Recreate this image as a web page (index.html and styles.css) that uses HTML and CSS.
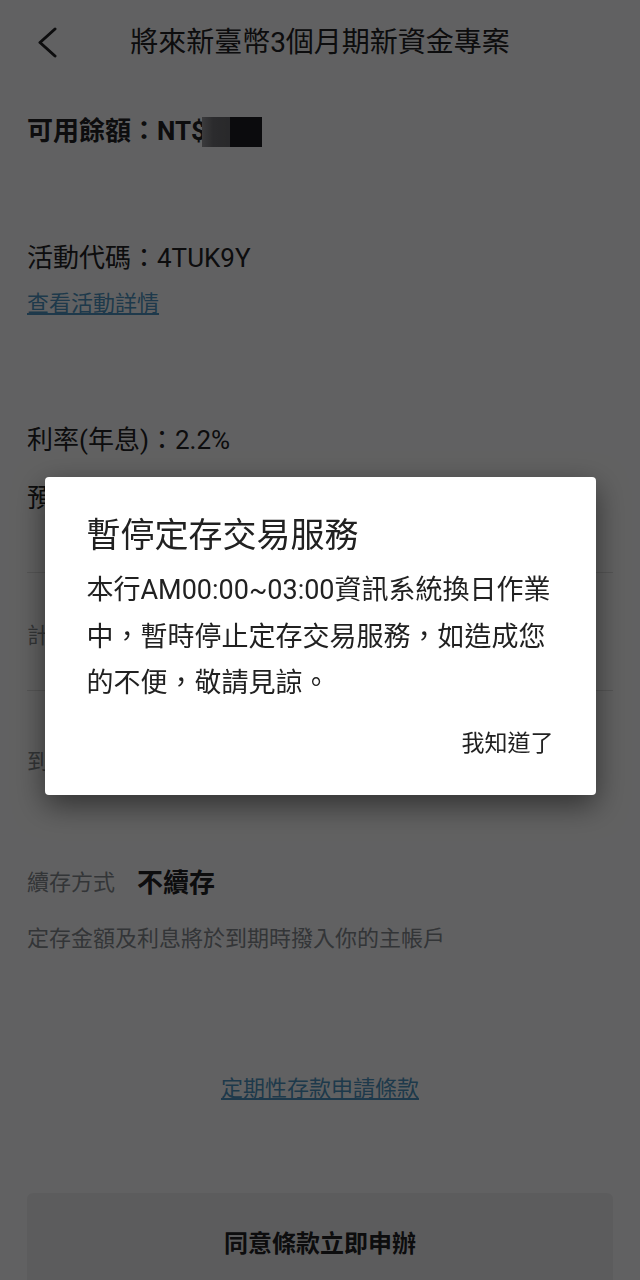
FILE: index.html
```html
<!DOCTYPE html>
<html>
<head>
  <meta charset="utf-8">
  <link rel="stylesheet" href="styles.css">
</head>
<body>
  <div class="page">
    <div class="header">
      <button class="back">
        <svg width="24" height="32" viewBox="0 0 24 32">
          <path d="M19 2 L4 15.5 L19 29" fill="none" stroke="#222" stroke-width="3" stroke-linecap="round" stroke-linejoin="round"/>
        </svg>
      </button>
      <div class="title">將來新臺幣3個月期新資金專案</div>
    </div>

    <div class="content">
      <div class="balance">可用餘額：NT$<span class="redact"><span class="redact-blur"></span><span class="redact-solid"></span></span></div>

      <div class="code">活動代碼：4TUK9Y</div>
      <a class="link" href="#">查看活動詳情</a>

      <div class="rate">利率(年息)：2.2%</div>

      <div class="row row-amount">
        <div class="row-label big">預存金額</div>
      </div>
      <div class="row row-period">
        <div class="row-label">計息</div>
      </div>
      <div class="row row-due">
        <div class="row-label">到期日</div>
      </div>

      <div class="renew">
        <span class="renew-label">續存方式</span>
        <span class="renew-value">不續存</span>
      </div>
      <div class="note">定存金額及利息將於到期時撥入你的主帳戶</div>

      <div class="terms"><a class="link" href="#">定期性存款申請條款</a></div>

      <button class="submit">同意條款立即申辦</button>
    </div>
  </div>

  <div class="overlay">
    <div class="dialog">
      <div class="dialog-title">暫停定存交易服務</div>
      <div class="dialog-body">本行AM00:00~03:00資訊系統換日作業中，暫時停止定存交易服務，如造成您的不便，敬請見諒。</div>
      <div class="dialog-actions">
        <button class="dialog-btn">我知道了</button>
      </div>
    </div>
  </div>
</body>
</html>
```

FILE: styles.css
```css
body {
  margin: 0;
  background-color: white;
  font-family: Roboto, "Noto Sans CJK TC", sans-serif;
  color: #222;
}
button {
  font-family: inherit;
}
.header {
  height: 86px;
  display: grid;
  grid-template-columns: 86px 1fr 86px;
  align-items: center;
}
.back {
  background: none;
  border: none;
  padding: 0;
  margin-left: 36px;
  width: 24px;
  height: 32px;
  display: flex;
}
.title {
  text-align: center;
  font-size: 28px;
  line-height: 40px;
}
.content {
  padding: 0 27px;
}
.balance {
  margin-top: 27px;
  font-size: 26px;
  line-height: 36px;
  font-weight: bold;
  display: flex;
  align-items: center;
}
.redact {
  display: flex;
  margin-left: -4px;
  height: 30px;
  margin-top: 2px;
}
.redact-blur {
  width: 28px;
  background: linear-gradient(90deg, #9a9a9c 0%, #727274 40%, #6c6c6e 100%);
}
.redact-solid {
  width: 32px;
  background-color: #1e1e20;
}
.code {
  margin-top: 91px;
  font-size: 26px;
  line-height: 36px;
}
.link {
  display: inline-block;
  color: #4f97c2;
  font-size: 22px;
  line-height: 32px;
  text-decoration: underline;
}
.code + .link {
  margin-top: 12px;
}
.rate {
  margin-top: 102px;
  font-size: 26px;
  line-height: 36px;
}
.row {
  border-bottom: 1px solid #e0e0e0;
}
.row-label {
  font-size: 22px;
  line-height: 36px;
  color: #868b8e;
}
.row-label.big {
  font-size: 26px;
  color: #222;
}
.row-amount {
  padding: 22px 0 56px;
}
.row-period {
  padding: 45px 0 36px;
}
.row-due {
  padding: 53px 0 31px;
  border-bottom: none;
}
.renew {
  margin-top: 54px;
  display: flex;
  align-items: center;
  line-height: 36px;
}
.renew-label {
  font-size: 22px;
  color: #868b8e;
}
.renew-value {
  margin-left: 22px;
  font-size: 26px;
  font-weight: bold;
}
.note {
  margin-top: 22px;
  font-size: 22px;
  line-height: 32px;
  color: #868b8e;
}
.terms {
  margin-top: 118px;
  text-align: center;
}
.submit {
  display: block;
  width: 100%;
  margin-top: 88px;
  height: 96px;
  border: none;
  border-radius: 6px;
  background-color: #f2f2f2;
  color: #222;
  font-size: 24px;
  font-weight: bold;
}
.overlay {
  position: fixed;
  top: 0;
  left: 0;
  right: 0;
  bottom: 0;
  background-color: rgba(0, 0, 2, 0.62);
  display: flex;
  justify-content: center;
  align-items: flex-start;
  padding-top: 477px;
}
.dialog {
  width: 551px;
  box-sizing: border-box;
  padding: 36px 42px 36px;
  background-color: white;
  border-radius: 4px;
  box-shadow: 0 10px 30px rgba(0, 0, 0, 0.5);
}
.dialog-title {
  font-size: 34px;
  line-height: 44px;
  color: #212121;
}
.dialog-body {
  margin-top: 10px;
  font-size: 27px;
  line-height: 46.5px;
  color: #212121;
}
.dialog-actions {
  margin-top: 22px;
  display: flex;
  justify-content: flex-end;
}
.dialog-btn {
  background: none;
  border: none;
  padding: 0;
  font-size: 23px;
  line-height: 30px;
  color: #212121;
}
```
